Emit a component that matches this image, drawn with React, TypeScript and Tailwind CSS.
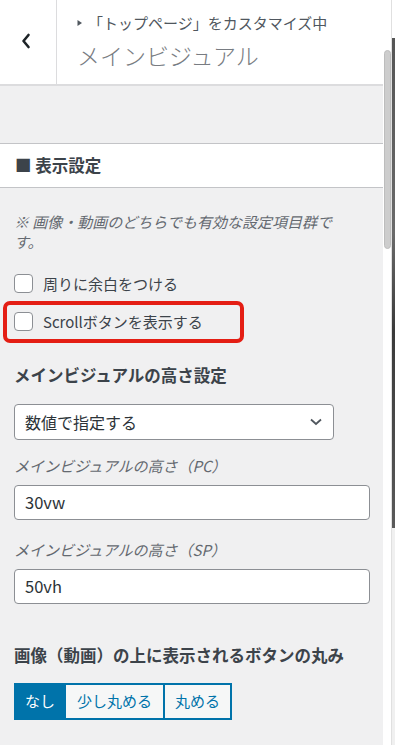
import React from 'react';

const font = { fontFamily: '"Noto Sans CJK JP", "Noto Sans", sans-serif' };

const Checkbox: React.FC<{ label: string }> = ({ label }) => (
  <label className="flex items-center gap-[10px] h-[20px]">
    <span className="w-[19px] h-[19px] rounded-[4px] border border-[#8c8f94] bg-white shrink-0" />
    <span className="text-[15px] text-[#3c434a] leading-none">{label}</span>
  </label>
);

const App: React.FC = () => {
  return (
    <div className="w-[395px] h-[745px] overflow-hidden flex bg-white" style={font}>
      <div className="w-[383px] shrink-0 flex flex-col bg-[#f0f0f1]">
        {/* header */}
        <div className="h-[86px] bg-white border-b-2 border-[#dcdcde] flex">
          <div className="w-[57px] border-r border-[#dcdcde] flex items-center justify-center">
            <svg width="12" height="18" viewBox="0 0 12 18" className="mt-[-2px] ml-[-4px]">
              <path d="M8.5 3 L3.5 9 L8.5 15" fill="none" stroke="#1d2327" strokeWidth="2.6" strokeLinecap="round" strokeLinejoin="round" />
            </svg>
          </div>
          <div className="pl-[20px] pt-[13px]">
            <div className="flex items-center text-[15px] text-[#50575e] leading-[20px]">
              <svg width="6" height="8" viewBox="0 0 6 8" className="mr-[5px]">
                <path d="M0.5 1 L5 4 L0.5 7 Z" fill="#50575e" />
              </svg>
              「トップページ」をカスタマイズ中
            </div>
            <div className="text-[23px] font-extralight text-[#787c82] leading-[30px] mt-[7px]">メインビジュアル</div>
          </div>
        </div>

        <div className="h-[57px]" />

        {/* section title */}
        <div className="h-[45px] bg-white border-y border-[#c3c4c7] flex items-center px-[15px]">
          <span className="text-[16.5px] font-bold text-[#3c434a]">■ 表示設定</span>
        </div>

        <div className="px-[14px] pt-[24px]">
          <p className="text-[15px] italic text-[#646970] leading-[20px] pr-[20px]">
            ※ 画像・動画のどちらでも有効な設定項目群です。
          </p>

          <div className="mt-[21px]">
            <Checkbox label="周りに余白をつける" />
          </div>
          <div className="mt-[18px] relative">
            <Checkbox label="Scrollボタンを表示する" />
            <span className="absolute left-[-11px] top-[-10px] w-[241px] h-[42px] border-[4px] border-[#e41e14] rounded-[7px]" />
          </div>

          <div className="mt-[32px] text-[16.5px] font-bold text-[#3c434a] leading-[24px]">メインビジュアルの高さ設定</div>

          <div className="mt-[17px] w-[320px] h-[36px] bg-white border border-[#8c8f94] rounded-[4px] flex items-center justify-between pl-[10px] pr-[10px]">
            <span className="text-[16px] text-[#2c3338]">数値で指定する</span>
            <svg width="14" height="10" viewBox="0 0 14 10">
              <path d="M2 2.5 L7 7 L12 2.5" fill="none" stroke="#50575e" strokeWidth="1.8" />
            </svg>
          </div>

          <div className="mt-[16px] text-[15px] italic text-[#646970] leading-[20px]">メインビジュアルの高さ（PC）</div>
          <div className="mt-[9px] w-[356px] h-[35px] bg-white border border-[#8c8f94] rounded-[4px] flex items-center pl-[10px]">
            <span className="text-[16.5px] text-[#2c3338]">30vw</span>
          </div>

          <div className="mt-[20px] text-[15px] italic text-[#646970] leading-[20px]">メインビジュアルの高さ（SP）</div>
          <div className="mt-[9px] w-[356px] h-[35px] bg-white border border-[#8c8f94] rounded-[4px] flex items-center pl-[10px]">
            <span className="text-[16.5px] text-[#2c3338]">50vh</span>
          </div>

          <div className="mt-[39px] text-[16.5px] font-bold text-[#3c434a] leading-[24px]">画像（動画）の上に表示されるボタンの丸み</div>

          <div className="mt-[16px] flex h-[37px]">
            <span className="w-[52px] bg-[#0073aa] text-white text-[15px] flex items-center justify-center border border-[#0073aa]">なし</span>
            <span className="w-[99px] bg-[#f6f7f7] text-[#0073aa] text-[15px] flex items-center justify-center border-y-2 border-r-2 border-[#0073aa]">少し丸める</span>
            <span className="w-[67px] bg-[#f6f7f7] text-[#0073aa] text-[15px] flex items-center justify-center border-y-2 border-r-2 border-[#0073aa]">丸める</span>
          </div>
        </div>
      </div>

      {/* scrollbar */}
      <div className="w-[9px] relative bg-white border-r border-[#e0e0e0]">
        <div className="absolute left-[1px] top-[50px] w-[7px] h-[199px] rounded-full bg-[#cdcdcd] border border-[#bdbdbd]" />
      </div>
      <div className="w-[3px] flex flex-col">
        <div className="h-[38px] bg-white" />
        <div className="h-[490px] bg-[linear-gradient(to_bottom,#555,#6a6a6a_40%,#3a3a3a_60%,#5a5a5a)]" />
        <div className="flex-1 bg-[#f0f0f0]" />
      </div>
    </div>
  );
};

export default App;
